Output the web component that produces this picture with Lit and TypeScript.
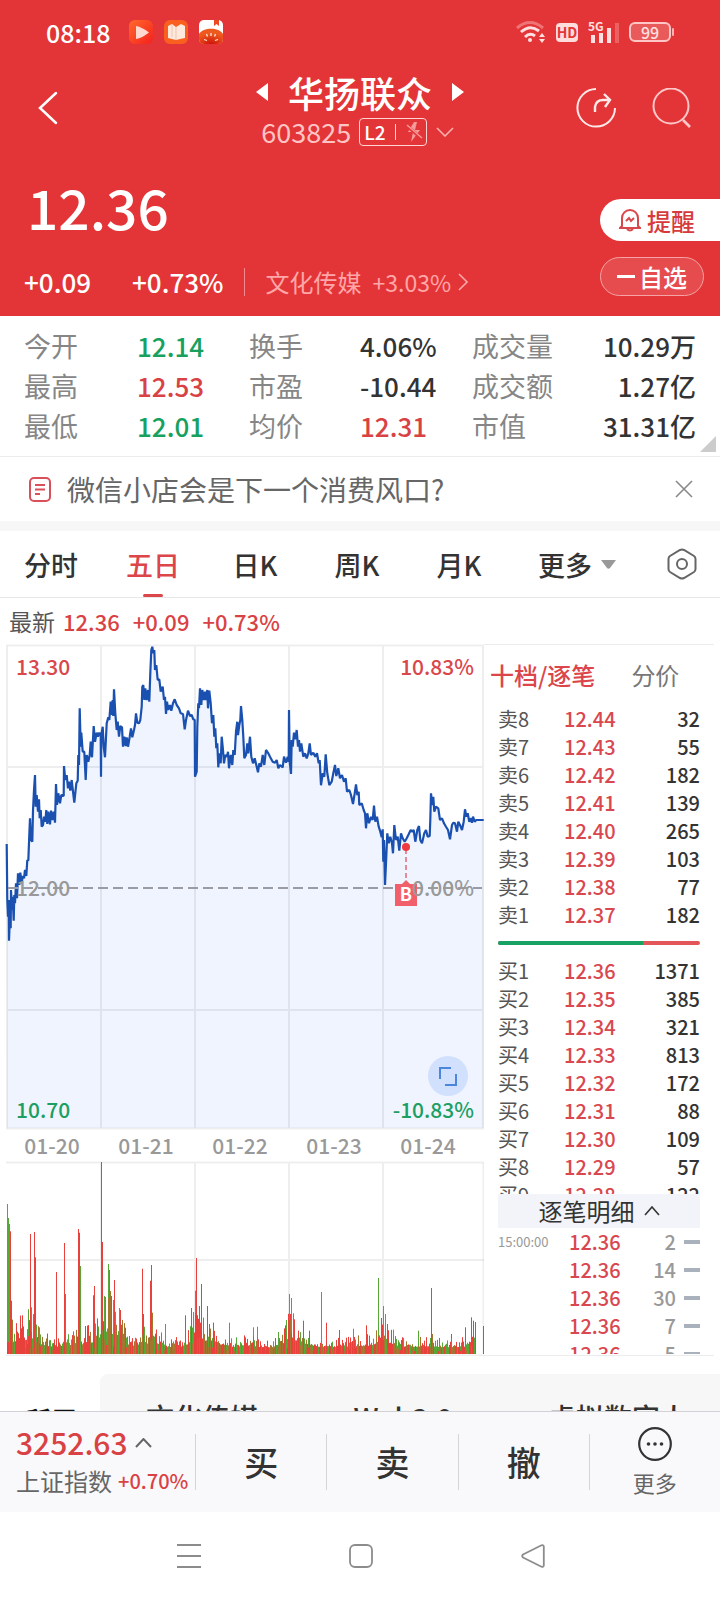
import { LitElement, html, svg, css } from "lit";
import { customElement, state } from "lit/decorators.js";

/* Price trace, in thirds of a chart unit: x, y pairs. */
const TRACE: number[] = [
  20,612,22,780,24,830,26,780,27,902,30,820,32,865,33,750,36,810,38,770,41,842,43,765,45,790,48,730,51,775,54,700,58,735,61,698,65,730,
  68,708,72,715,75,690,79,708,82,660,85,662,88,585,90,535,93,600,97,605,99,512,102,450,105,405,107,500,110,465,114,515,117,478,119,535,
  122,510,125,560,129,555,132,530,136,545,139,510,142,552,145,515,150,553,153,512,157,540,161,515,165,548,168,432,171,495,175,460,
  180,490,184,465,191,468,192,378,196,420,200,405,204,445,207,425,211,452,215,420,219,455,223,488,229,430,233,422,235,345,237,375,
  239,205,242,320,244,278,248,335,253,335,257,420,260,345,265,365,269,345,272,305,276,352,281,258,285,305,290,278,294,290,298,278,
  302,285,303,410,304,285,308,260,311,320,315,352,320,250,325,232,328,240,332,185,336,225,338,180,340,228,342,148,346,220,350,270,
  353,245,357,290,361,258,366,262,369,320,373,290,377,318,380,292,384,320,389,290,393,265,397,292,402,270,405,255,408,220,412,248,
  417,250,421,240,425,200,427,140,430,135,433,180,436,145,440,180,444,150,448,185,451,100,454,30,457,20,460,40,463,30,465,90,469,75,
  473,120,478,118,482,155,488,140,492,180,495,170,498,222,501,185,505,210,510,195,514,212,519,190,524,178,530,195,537,205,542,220,
  549,222,554,268,558,240,564,212,570,228,575,225,580,238,584,240,585,410,590,395,592,260,595,190,597,205,600,145,604,195,607,150,
  611,180,615,155,618,180,622,150,624,205,628,152,632,190,636,250,640,225,643,290,646,265,649,325,652,310,655,382,658,340,662,370,
  665,290,669,330,672,370,676,345,681,350,684,335,687,385,692,345,697,375,700,330,704,345,708,275,712,245,714,285,718,255,721,240,
  723,198,727,240,730,290,733,355,738,345,742,310,745,340,750,290,754,350,759,370,764,355,769,375,774,397,778,370,783,380,788,345,
  793,375,798,330,805,340,810,350,818,365,825,368,830,360,835,385,840,375,848,382,852,350,858,368,863,350,866,365,867,210,869,365,
  873,402,875,300,878,320,882,278,886,298,890,270,894,320,897,300,900,335,904,310,910,350,915,340,920,355,925,340,929,310,933,345,
  940,338,946,350,951,340,956,370,959,360,963,436,968,400,973,410,977,343,982,400,988,435,995,425,1000,400,1005,375,1009,408,
  1015,385,1020,415,1026,405,1032,425,1037,415,1041,455,1048,450,1053,465,1059,492,1064,460,1068,433,1072,465,1076,455,1078,495,
  1085,490,1091,510,1095,520,1098,565,1102,520,1107,550,1113,530,1118,540,1122,497,1126,545,1131,530,1136,560,1141,575,1145,592,
  1148,568,1150,665,1152,600,1155,735,1158,670,1162,580,1166,610,1171,590,1176,610,1179,640,1183,555,1188,600,1193,590,1198,632,
  1203,580,1208,595,1214,605,1220,595,1225,585,1232,570,1237,575,1241,570,1246,605,1252,570,1257,558,1261,600,1266,610,1273,580,
  1278,570,1283,590,1289,588,1291,540,1293,460,1297,495,1300,470,1303,515,1308,500,1315,505,1320,540,1326,535,1332,550,1338,560,
  1344,570,1350,598,1356,555,1360,548,1365,550,1371,575,1375,545,1380,555,1386,570,1391,545,1395,508,1399,530,1403,520,1408,545,
  1413,535,1416,548,1419,530,1424,545,1429,540,1451,540,
];

/* Typical turnover level along the session: x, level. */
const LEVEL: number[] = [
  20,80,50,90,80,110,105,130,120,66,150,40,190,38,230,74,245,62,290,92,305,170,330,180,350,130,375,86,390,44,430,72,470,72,500,36,
  540,38,570,72,590,124,620,86,650,72,690,36,740,48,790,32,840,38,870,124,900,82,950,40,1000,36,1060,42,1110,48,1150,104,1180,56,
  1220,36,1290,44,1330,32,1390,38,1420,58,1428,10,
];

const SPIKES: [number, number, string][] = [
  [22,450,"g"],[25,408,"g"],[28,390,"g"],[31,368,"r"],[34,160,"r"],[67,116,"r"],[91,360,"r"],[94,140,"g"],[103,366,"r"],[106,290,"r"],
  [107,150,"g"],[169,246,"r"],[170,134,"g"],[193,333,"r"],[196,180,"o"],[235,375,"r"],[238,364,"r"],[241,264,"g"],[280,176,"r"],
  [283,204,"r"],[304,576,"r"],[307,336,"r"],[308,210,"g"],[313,174,"g"],[325,270,"g"],[328,252,"o"],[334,174,"r"],[343,222,"r"],
  [340,162,"g"],[358,138,"g"],[362,132,"r"],[427,256,"r"],[430,120,"r"],[451,220,"r"],[454,267,"r"],[457,124,"o"],[497,90,"g"],
  [555,116,"r"],[574,138,"r"],[580,126,"g"],[586,190,"g"],[589,288,"r"],[592,116,"r"],[598,144,"r"],[604,210,"r"],[622,144,"r"],
  [628,90,"r"],[688,94,"g"],[760,80,"g"],[773,82,"g"],[835,66,"g"],[857,86,"r"],[868,180,"g"],[871,120,"r"],[874,168,"g"],
  [880,122,"g"],[883,104,"r"],[911,100,"r"],[928,70,"r"],[964,186,"g"],[979,94,"r"],[1018,72,"r"],[1060,76,"g"],[1099,86,"r"],
  [1135,228,"g"],[1145,108,"r"],[1150,144,"g"],[1156,120,"g"],[1161,90,"r"],[1256,70,"g"],[1294,198,"r"],[1297,60,"o"],[1354,60,"r"],
  [1396,80,"r"],[1414,110,"r"],[1420,100,"r"],[1426,96,"r"],[1449,84,"r"],
];

const INK: Record<string, string> = { r: "#e8413c", g: "#55a835", o: "#a3752f" };

function levelAt(x: number): number {
  for (let i = 2; i < LEVEL.length; i += 2) {
    if (x <= LEVEL[i]) {
      const t = (x - LEVEL[i - 2]) / (LEVEL[i] - LEVEL[i - 2]);
      return LEVEL[i - 1] + t * (LEVEL[i + 1] - LEVEL[i - 1]);
    }
  }
  return 10;
}

function volumePaths(): Record<string, string> {
  const out: Record<string, string> = { r: "", g: "", o: "" };
  const base = 710;
  const bar = (x: number, h: number, k: string) => {
    out[k] += `M${(Math.floor(x / 3) + 0.5).toFixed(1)} ${base}v-${(h / 3).toFixed(1)}`;
  };
  let seed = 77;
  const rnd = () => {
    seed = (seed * 16807) % 2147483647;
    return seed / 2147483647;
  };
  for (let x = 21; x < 1428; x += 3) {
    const lvl = levelAt(x);
    const h = 10 + lvl * (0.3 + 0.8 * Math.pow(rnd(), 2));
    const c = rnd();
    bar(x, h, c < 0.4 ? "r" : c < 0.7 ? "g" : "o");
    if (c >= 0.55) bar(x, h * 0.4, rnd() < 0.35 ? "r" : "o");
  }
  for (const [x, h, k] of SPIKES) bar(x, h, k);
  return out;
}

function tracePath(): string {
  let d = "";
  for (let i = 0; i < TRACE.length; i += 2) {
    d += `${i ? "L" : "M"}${(TRACE[i] / 3).toFixed(1)} ${(TRACE[i + 1] / 3 - 4).toFixed(1)}`;
  }
  return d;
}

@customElement("stock-chart")
class StockChart extends LitElement {
  static styles = css`
    :host { display: block; }
    svg { display: block; width: 100%; height: auto; }
    text { font-size: 21px; font-weight: 500; }
    .grid { stroke: #000; stroke-opacity: 0.065; stroke-width: 2; fill: none; }
    .trace { fill: none; stroke: #1a50b0; stroke-width: 2.2; stroke-linejoin: bevel; }
    .area { fill: #eff4fe; }
    .base { stroke: #9b9ca3; stroke-width: 2; stroke-dasharray: 10 5; }
    .up { fill: #d9474b; }
    .down { fill: #1c9f62; }
    .mute { fill: #999; }
    .end { text-anchor: end; }
    .mid { text-anchor: middle; }
    .flag { fill: #fff; font-size: 18px; font-weight: 700; text-anchor: middle; }
  `;

  render() {
    const line = tracePath();
    const vol = volumePaths();
    const days = ["01-20", "01-21", "01-22", "01-23", "01-24"];
    return html`
      <svg viewBox="0 0 484 712" role="img" aria-label="五日走势">
        <path class="area" d="${line}V484H7z"></path>
        <path class="grid" d="M6 1.500H484M7 123H484M7 366H484M6 484.500H484M7 1V485M101 1V485M195 1V485M289 1V485M383 1V485M483 1V485"></path>
        <path class="grid" d="M6 518.500H484M7 616H484M101 519V710M195 519V710M289 519V710M383 519V710"></path>
        <path class="grid" stroke-width="1" d="M483.500 519V710M6 711.500H484"></path>
        ${["g", "r", "o"].map((k) => svg`<path d=${vol[k]} stroke=${INK[k]} stroke-width="1" fill="none"></path>`)}
        <path class="trace" d=${line}></path>
        <text class="up" x="16" y="31">13.30</text>
        <text class="up end" x="474" y="31">10.83%</text>
        <text class="down" x="16" y="474">10.70</text>
        <text class="down end" x="474" y="474">-10.83%</text>
        <path class="base" d="M8 244H482"></path>
        <path d="M406 205V238" stroke="#e58a98" stroke-width="2" stroke-dasharray="5 3"></path>
        <circle cx="406" cy="203" r="4" fill="#f0383f"></circle>
        <path d="M395 240h7l4-4l4 4h7v22h-22z" fill="#f1606a"></path>
        <text class="flag" x="406" y="257">B</text>
        <text class="mute" x="16" y="252">12.00</text>
        <text class="mute end" x="474" y="252">0.00%</text>
        <circle cx="448" cy="432" r="20" fill="#d0e0fd"></circle>
        <path d="M440 435V424H451M456 430V441H445" fill="none" stroke="#4a86dc" stroke-width="2"></path>
        ${days.map((d, i) => svg`<text class="mute mid" x=${52 + i * 94} y="510">${d}</text>`)}
      </svg>
    `;
  }
}

@customElement("order-book")
class OrderBook extends LitElement {
  static styles = css`
    :host { display: flex; flex-direction: column; box-sizing: border-box; border-top: 1px solid #ececec; border-bottom: 1px solid #ececec; margin-right: 6px; }
    .tabs { display: flex; gap: 36px; padding-left: 6px; height: 60px; align-items: center; }
    button { all: unset; cursor: pointer; }
    .tab { font-size: 24px; line-height: 30px; color: #777; }
    .tab.on { color: #dc4549; font-weight: 500; }
    table { border-collapse: collapse; width: 100%; table-layout: fixed; font-size: 20px; line-height: 28px; }
    td, th { padding: 0; height: 28px; text-align: left; font-weight: 400; white-space: nowrap; overflow: visible; }
    .side { width: 66px; color: #555; }
    .price { color: #d9474f; font-weight: 500; }
    .qty { text-align: right; color: #333; font-weight: 500; }
    .box { padding: 0 14px; }
    .bids { height: 237px; overflow: hidden; }
    .ratio { display: flex; height: 4px; margin: 12px 14px; border-radius: 2px; overflow: hidden; background: #e2565a; }
    .ratio span { background: #17a263; }
    .more { display: flex; align-items: center; justify-content: center; gap: 9px; height: 34px; margin: 0 14px; background: #f3f4f9; color: #333; font-size: 24px; line-height: 34px; }
    .ticks { height: 126px; overflow: hidden; }
    .time { width: 71px; font-size: 13px; color: #999; }
    .count { text-align: right; color: #999; font-weight: 500; }
    .flat { width: 24px; }
    .dash { display: block; width: 16px; height: 4px; background: #a9b1bc; margin-left: auto; }
  `;

  private row(side: string, price: string, qty: string) {
    return html`<tr><th class="side" scope="row">${side}</th><td class="price">${price}</td><td class="qty">${qty}</td></tr>`;
  }

  render() {
    const asks = [["卖8", "12.44", "32"], ["卖7", "12.43", "55"], ["卖6", "12.42", "182"], ["卖5", "12.41", "139"], ["卖4", "12.40", "265"], ["卖3", "12.39", "103"], ["卖2", "12.38", "77"], ["卖1", "12.37", "182"]];
    const bids = [["买1", "12.36", "1371"], ["买2", "12.35", "385"], ["买3", "12.34", "321"], ["买4", "12.33", "813"], ["买5", "12.32", "172"], ["买6", "12.31", "88"], ["买7", "12.30", "109"], ["买8", "12.29", "57"], ["买9", "12.28", "122"]];
    const ticks = [["15:00:00", "2"], ["", "14"], ["", "30"], ["", "7"], ["", "5"]];
    return html`
      <div class="tabs">
        <button class="tab on">十档/逐笔</button>
        <button class="tab">分价</button>
      </div>
      <div class="box"><table>${asks.map((r) => this.row(r[0], r[1], r[2]))}</table></div>
      <div class="ratio"><span style="width:72%"></span></div>
      <div class="box bids"><table>${bids.map((r) => this.row(r[0], r[1], r[2]))}</table></div>
      <button class="more">逐笔明细
        <svg width="16" height="10" viewBox="0 0 16 10" fill="none" stroke="#333" stroke-width="1.600"><path d="M1 9L8 1L15 9"></path></svg>
      </button>
      <div class="box ticks">
        <table>${ticks.map((t) => html`<tr><td class="time">${t[0]}</td><td class="price">12.36</td><td class="count">${t[1]}</td><td class="flat"><span class="dash"></span></td></tr>`)}</table>
      </div>
    `;
  }
}

@customElement("app-root")
class AppRoot extends LitElement {
  @state() private period = "五日";

  static styles = css`
    :host { display: block; background: #fff; color: #333; font-family: "Noto Sans CJK SC", "Noto Sans", sans-serif; }
    button { all: unset; cursor: pointer; box-sizing: border-box; }
    svg { display: block; flex: none; }
    .hero { background: #e33537; color: #fff; }
    .status { display: flex; align-items: center; justify-content: space-between; height: 64px; padding: 0 46px; }
    .status > div { display: flex; align-items: center; }
    .clock { font-size: 25px; line-height: 30px; font-weight: 500; margin-right: 19px; }
    .apps { display: flex; gap: 11px; }
    .signals { gap: 10px; color: #ffe0e0; }
    .hd { font-size: 14px; line-height: 19px; font-weight: 700; background: #ffdcdc; color: #e33537; border-radius: 4px; width: 22px; text-align: center; }
    .battery { position: relative; font-size: 16px; line-height: 16px; border: 2px solid #ffc6c6; border-radius: 6px; width: 38px; margin-right: 3px; text-align: center; background: #e95a5b; font-weight: 500; }
    .battery::after { content: ""; position: absolute; right: -5px; top: 4px; width: 2px; height: 8px; border-radius: 1px; background: #ffb0b0; }
    .bar { display: grid; grid-template-columns: 120px 1fr 130px; align-items: center; height: 88px; padding: 0 28px 0 38px; }
    .title { padding-top: 3px; }
    .name { display: flex; justify-content: center; align-items: center; gap: 20px; margin: 0; font-size: 36px; line-height: 44px; font-weight: 500; }
    .code { display: flex; justify-content: center; align-items: center; gap: 8px; padding-right: 4px; font-size: 27px; line-height: 36px; color: #ffc4c4; }
    .badge { display: flex; align-items: center; gap: 9px; border: 1px solid #ffd4d4; border-radius: 4px; box-sizing: border-box; height: 28px; padding: 0 3px 0 4px; color: #fff; font-size: 19px; line-height: 24px; font-weight: 500; }
    .rule { width: 1px; height: 16px; background: #ffd4d4; }
    .tools { display: flex; justify-content: flex-end; gap: 36px; }
    .quote { display: flex; justify-content: space-between; padding: 21px 0 16px 24px; }
    .price { font-size: 55px; line-height: 66px; font-weight: 500; padding-left: 3px; }
    .delta { display: flex; align-items: center; margin-top: 25px; font-size: 26px; line-height: 36px; font-weight: 500; }
    .delta span + span { margin-left: 41px; }
    .sector { display: flex; align-items: center; gap: 11px; margin-left: 21px; padding-left: 20px; font-size: 24px; line-height: 28px; font-weight: 400; color: #ffa6a8; border-left: 1px solid #f28a8b; text-decoration: none; }
    .sector b { font-weight: 400; font-size: 23px; }
    .sector svg { margin-left: -4px; }
    .acts { display: flex; flex-direction: column; gap: 16px; padding-top: 26px; width: 120px; font-size: 24px; font-weight: 500; }
    .alert { display: flex; align-items: center; gap: 6px; height: 42px; padding-left: 19px; background: #fff; color: #d63a3d; border-radius: 21px 0 0 21px; }
    .fav { display: flex; align-items: center; justify-content: center; gap: 4px; height: 39px; width: 104px; border: 1px solid #f5a3a4; border-radius: 20px; background: #e64c4e; }
    .stats { position: relative; display: grid; grid-template-columns: 113px 112px 111px 112px 1fr auto; padding: 10px 24px; margin: 0; border-bottom: 1px solid #ececec; font-size: 27px; line-height: 40px; }
    .stats dt { color: #868686; }
    .stats dd { margin: 0; font-size: 26px; font-weight: 500; }
    .last { text-align: right; }
    .red { color: #d94244; }
    .green { color: #17a05e; }
    .fold { position: absolute; right: 4px; bottom: 4px; }
    .news { display: flex; align-items: center; gap: 16px; height: 64px; padding: 0 27px 0 29px; border-bottom: 10px solid #f7f7f7; color: #666; font-size: 28px; line-height: 40px; }
    .news a { flex: 1; color: inherit; text-decoration: none; }
    .periods { display: grid; grid-template-columns: repeat(5, 102fr) 134fr 76fr; height: 66px; border-bottom: 1px solid #e8e8e8; }
    .period { position: relative; display: flex; align-items: center; justify-content: center; gap: 9px; font-size: 27px; color: #333; font-weight: 500; }
    .period.on { color: #dc4549; }
    .period.on::after { content: ""; position: absolute; left: 50%; bottom: 0; width: 20px; height: 3px; margin-left: -10px; background: #dc4549; border-radius: 2px; }
    .latest { display: flex; gap: 13px; height: 46px; padding: 0 9px; font-size: 22px; line-height: 46px; color: #d94244; font-weight: 500; }
    .latest span:first-child { font-size: 23px; color: #555; margin-right: -5px; font-weight: 400; }
    .market { display: grid; grid-template-columns: 484fr 236fr; }
    .peek { display: flex; height: 55px; overflow: hidden; font-size: 28px; line-height: 40px; color: #333; }
    .lead { width: 100px; box-sizing: border-box; padding: 44px 0 0 25px; font-size: 26px; font-weight: 700; color: #111; flex: none; }
    .tags { flex: 1; display: flex; justify-content: space-between; margin-top: 18px; padding: 23px 32px 0 46px; background: #f7f7f7; border-radius: 8px 0 0 0; white-space: nowrap; font-weight: 500; }
    .dock { display: grid; grid-template-columns: 195px repeat(3, 131fr) 131fr; align-items: center; height: 101px; box-sizing: border-box; background: #f9f9fc; border-top: 1px solid #d2d2d6; }
    .index { padding-left: 16px; white-space: nowrap; }
    .point { display: flex; align-items: center; gap: 7px; font-size: 30px; line-height: 37px; color: #d94244; font-weight: 500; }
    .sub { display: flex; align-items: center; gap: 6px; font-size: 24px; line-height: 39px; color: #666; }
    .sub b { font-size: 20px; font-weight: 500; color: #d94244; }
    .trade { height: 56px; line-height: 56px; text-align: center; font-size: 34px; font-weight: 500; border-left: 1px solid #d5d5d8; }
    .etc { height: 56px; border-left: 1px solid #d5d5d8; display: flex; flex-direction: column; align-items: center; justify-content: center; gap: 6px; font-size: 22px; line-height: 30px; color: #666; }
    .sys { display: flex; justify-content: center; gap: 148px; height: 88px; padding-left: 1px; align-items: center; }
  `;

  render() {
    const periods = ["分时", "五日", "日K", "周K", "月K"];
    return html`
      <header class="hero">
        <div class="status">
          <div>
            <span class="clock">08:18</span>
            <div class="apps">
              <svg width="24" height="24" viewBox="0 0 24 24"><defs><linearGradient id="a" x1="0" y1="0" x2="1" y2="1"><stop offset="0" stop-color="#ff6a2c"></stop><stop offset="1" stop-color="#f5201c"></stop></linearGradient></defs><rect width="24" height="24" rx="6" fill="url(#a)"></rect><path d="M7 6q6 1 13 6.500Q13 18 7 19z" fill="#ffd9cf"></path></svg>
              <svg width="24" height="24" viewBox="0 0 24 24"><rect width="24" height="24" rx="6" fill="#f9601f"></rect><path d="M4 6l4-2 4 3 5-3 4 2v12l-5 1-4 1-4-1-4-1z" fill="#ffe9dc"></path><path d="M12 7v13M8 4v13" stroke="#eec4ac"></path></svg>
              <svg width="24" height="24" viewBox="0 0 24 24"><defs><radialGradient id="t" cx=".5" cy="1" r=".7"><stop offset="0" stop-color="#cf1208"></stop><stop offset="1" stop-color="#ee5a1e"></stop></radialGradient></defs><rect width="24" height="24" rx="5" fill="#fff"></rect><path d="M15 0h5v6l-2.500-2L15 6z" fill="#ee4a20"></path><path d="M0 14C4 7 20 7 24 14v5q0 5-5 5H5q-5 0-5-5z" fill="url(#t)"></path><path d="M12 13v3M7.500 14l1 2.500M16.500 14l-1 2.500M5 19.500l3 1M19 19.500l-3 1" stroke="#ffe6dc" stroke-width="1.300"></path></svg>
            </div>
          </div>
          <div class="signals">
            <svg width="30" height="24" viewBox="0 0 30 24" fill="none" stroke="#ffe0e0" stroke-width="3"><path d="M1 8Q14-3 27 8" stroke="#ee7475"></path><path d="M5 12Q14 4 23 11M9 17Q14 12 19 16"></path><circle cx="14" cy="20" r="2" fill="#ffe0e0" stroke="none"></circle><path d="M23 17l3-4 3 4zM23 19l3 4 3-4z" fill="#ffe0e0" stroke="none"></path></svg>
            <span class="hd">HD</span>
            <svg width="31" height="24" viewBox="0 0 31 24"><text x="0" y="11" font-size="12" font-weight="700" fill="#ffe0e0">5G</text><path d="M3 15h4v8H3zM11 13h4v10h-4zM19 8h4v15h-4z" fill="#ffe0e0"></path><path d="M27 3h4v20h-4z" fill="#eb6263"></path></svg>
            <span class="battery">99</span>
          </div>
        </div>
        <div class="bar">
          <button aria-label="返回"><svg width="20" height="34" viewBox="0 0 20 34" fill="none" stroke="#fff" stroke-width="2.500" stroke-linecap="round"><path d="M18 2L2 17L18 32"></path></svg></button>
          <div class="title">
            <h1 class="name">
              <svg width="12" height="18" viewBox="0 0 12 18" fill="#fff"><path d="M12 0v18L0 9z"></path></svg>
              华扬联众
              <svg width="12" height="18" viewBox="0 0 12 18" fill="#fff"><path d="M0 0v18L12 9z"></path></svg>
            </h1>
            <div class="code">603825
              <span class="badge">L2<i class="rule"></i><svg width="18" height="20" viewBox="0 0 18 20"><path d="M9 0L3 10h5L6 20L15 8H10L12 0z" fill="#f59a9b"></path><path d="M1 3L17 17" stroke="#e33537" stroke-width="3"></path><path d="M2 3L17 16" stroke="#f59a9b" stroke-width="1.500"></path></svg></span>
              <svg width="20" height="10" viewBox="0 0 20 10" fill="none" stroke="#ffb0b0" stroke-width="1.600"><path d="M2 1l8 8 8-8"></path></svg>
            </div>
          </div>
          <div class="tools">
            <button aria-label="分享"><svg width="40" height="40" viewBox="0 0 40 40" fill="none" stroke="#ffe8e8" stroke-width="2"><path d="M20 1A18.800 18.800 0 1 0 39 20"></path><path d="M19 24v-5q1-7 8-7h7M28 6l6 6-5 7" stroke-width="2.400"></path></svg></button>
            <button aria-label="搜索"><svg width="40" height="40" viewBox="0 0 40 40" fill="none" stroke="#ffc8c8" stroke-width="2"><circle cx="19" cy="18" r="17.500"></circle><path d="M31 32l7 7" stroke-width="2.600"></path></svg></button>
          </div>
        </div>
        <div class="quote">
          <div>
            <div class="price">12.36</div>
            <div class="delta">
              <span>+0.09</span><span>+0.73%</span>
              <a class="sector" href="#sector">文化传媒 <b>+3.03%</b><svg width="10" height="18" viewBox="0 0 10 18" fill="none" stroke="#ffa6a8" stroke-width="1.600"><path d="M1 1l8 8-8 8"></path></svg></a>
            </div>
          </div>
          <div class="acts">
            <button class="alert"><svg width="22" height="24" viewBox="0 0 22 24" fill="none" stroke="#d8474b" stroke-width="2"><path d="M3 18V10a8 8 0 0 1 16 0v8l2 2H1z"></path><path d="M8 21q3 3 6 0M7 13l3-3 2 3 3-3"></path></svg>提醒</button>
            <button class="fav"><svg width="18" height="3"><rect width="18" height="3" fill="#fff"></rect></svg>自选</button>
          </div>
        </div>
      </header>

      <dl class="stats">
        <dt>今开</dt><dd class="green">12.14</dd><dt>换手</dt><dd>4.06%</dd><dt>成交量</dt><dd class="last">10.29万</dd>
        <dt>最高</dt><dd class="red">12.53</dd><dt>市盈</dt><dd>-10.44</dd><dt>成交额</dt><dd class="last">1.27亿</dd>
        <dt>最低</dt><dd class="green">12.01</dd><dt>均价</dt><dd class="red">12.31</dd><dt>市值</dt><dd class="last">31.31亿</dd>
        <svg class="fold" width="16" height="16" viewBox="0 0 16 16"><path d="M16 0v16H0z" fill="#ccc"></path></svg>
      </dl>

      <div class="news">
        <svg width="22" height="25" viewBox="0 0 22 25" fill="none" stroke="#d9505a" stroke-width="2"><rect x="1" y="1" width="20" height="23" rx="4"></rect><path d="M6 8h10M6 12.500h10M6 17h5"></path></svg>
        <a href="#news">微信小店会是下一个消费风口?</a>
        <button aria-label="关闭"><svg width="18" height="18" viewBox="0 0 18 18" stroke="#888" stroke-width="1.600"><path d="M1 1l16 16M17 1L1 17"></path></svg></button>
      </div>

      <nav class="periods">
        ${periods.map((p) => html`<button class="period ${p === this.period ? "on" : ""}" @click=${() => (this.period = p)}>${p}</button>`)}
        <button class="period">更多 <svg width="15" height="9" viewBox="0 0 15 9"><path d="M0 0h15L9 8q-1.500 1.500-3 0z" fill="#999"></path></svg></button>
        <button class="period" aria-label="设置"><svg width="30" height="32" viewBox="0 0 30 32" fill="none" stroke="#666" stroke-width="2"><path d="M13 2q2-1 4 0l10 6q1.500 1 1.500 3v10q0 2-1.500 3l-10 6q-2 1-4 0l-10-6q-1.500-1-1.500-3V11q0-2 1.500-3z"></path><circle cx="15" cy="16" r="5"></circle></svg></button>
      </nav>

      <div class="latest"><span>最新</span><span>12.36</span><span>+0.09</span><span>+0.73%</span></div>

      <main class="market">
        <stock-chart></stock-chart>
        <order-book></order-book>
      </main>

      <section class="peek">
        <div class="lead">所属</div>
        <div class="tags"><span>文化传媒</span><span>Web3.0</span><span>虚拟数字人</span></div>
      </section>

      <footer class="dock">
        <div class="index">
          <div class="point">3252.63<svg width="17" height="10" viewBox="0 0 17 10" fill="none" stroke="#666" stroke-width="2"><path d="M1 9l7.500-8L16 9"></path></svg></div>
          <div class="sub">上证指数<b>+0.70%</b></div>
        </div>
        <button class="trade">买</button>
        <button class="trade">卖</button>
        <button class="trade">撤</button>
        <button class="etc">
          <svg width="34" height="34" viewBox="0 0 34 34"><circle cx="17" cy="17" r="15.800" fill="none" stroke="#333" stroke-width="2.200"></circle><circle cx="10.500" cy="17" r="1.800" fill="#333"></circle><circle cx="17" cy="17" r="1.800" fill="#333"></circle><circle cx="23.500" cy="17" r="1.800" fill="#333"></circle></svg>
          更多
        </button>
      </footer>

      <div class="sys">
        <button aria-label="任务"><svg width="24" height="24" viewBox="0 0 24 24" stroke="#8c8c8c" stroke-width="2"><path d="M0 1h24M0 12h24M0 23h24"></path></svg></button>
        <button aria-label="主页"><svg width="24" height="24" viewBox="0 0 24 24" fill="none" stroke="#8c8c8c" stroke-width="1.800"><rect x="1" y="1" width="22" height="22" rx="5"></rect></svg></button>
        <button aria-label="后退"><svg width="24" height="24" viewBox="0 0 24 24" fill="none" stroke="#8c8c8c" stroke-width="1.800" stroke-linejoin="round"><path d="M2 10.500L20.500 1.300q2-.6 2.300 1v19.400q-.3 1.600-2.300 1L2 13.500q-1.500-1.500 0-3z"></path></svg></button>
      </div>
    `;
  }
}
